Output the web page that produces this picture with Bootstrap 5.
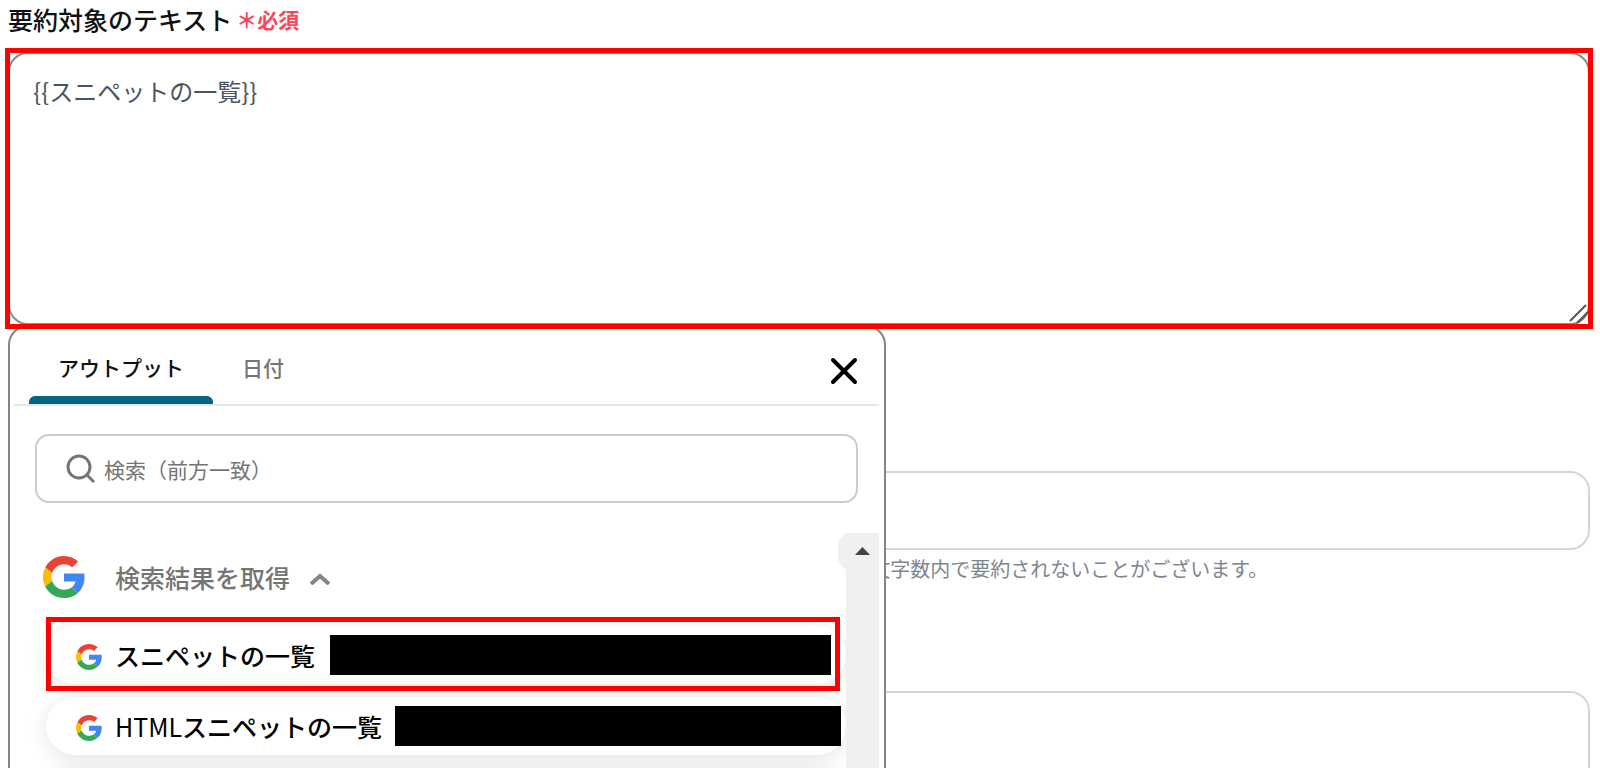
<!DOCTYPE html>
<html lang="ja">
<head>
<meta charset="utf-8">
<meta name="viewport" content="width=device-width, initial-scale=1">
<title>要約対象のテキスト</title>
<link href="https://cdn.jsdelivr.net/npm/bootstrap@5.3.0/dist/css/bootstrap.min.css" rel="stylesheet">
<style>
body { font-family: "Noto Sans CJK JP", sans-serif; font-size: 25px; line-height: 32px; color: #111; background: #fff; }
.form-page { padding: 3px 10px 0 8px; }
.field-label { height: 49px; gap: 4px; font-weight: 500; }
.required-mark { font-size: 21px; font-weight: 700; color: #ff4458; }
.field-box { border: 2px solid #d2d7de; border-radius: 20px; }
.field-box, .field-box:focus { box-shadow: none; }
.source-text { height: 273px; padding: 21px 23px; border-color: #8a8a8a; font-size: 24px; line-height: 32px; color: #4a545e; resize: none; }
.limit-input { height: 79px; margin-top: 146px; }
.limit-hint { margin: 3px 0 0 54.5%; font-size: 20px; color: #7d868f; white-space: nowrap; }
.extra-text { height: 180px; margin-top: 106px; resize: none; }
.marker { position: absolute; border: 5px solid #f00; pointer-events: none; }
.marker-field { inset: -4px -3px; z-index: 5; }
.marker-item { inset: -9px 6px -7px 0; z-index: 2; }
.grip { position: absolute; right: 0; bottom: 0; }
.picker { position: absolute; top: 100%; left: 0; width: 55.5%; height: 520px; padding: 0 5px 0 4px; border: 2px solid #858585; border-radius: 20px; background: #fff; z-index: 3; overflow: hidden; }
.picker-tabs { height: 79px; padding: 0 17px 0 15px; border-bottom: 2px solid #e6e6e6; font-size: 21px; }
.picker-tab { position: relative; border: 0; background: none; padding: 3px 29px 0; color: #757575; font-weight: 500; }
.picker-tab.active { color: #111; }
.picker-tab.active::after { content: ""; position: absolute; left: 0; right: 0; bottom: 0; height: 8px; border-radius: 6px 6px 0 0; background: #03657f; }
.close-x { border: 0; background: none; padding: 2px 0 0; }
.search-box { height: 69px; margin: 28px 21px 0 21px; padding: 0 28px; gap: 9px; border: 2px solid #ccc; border-radius: 14px; }
.search-box input { border: 0; outline: 0; padding: 0; background: none; font-size: 21px; }
.search-box input::placeholder { color: #757575; opacity: 1; }
.results { height: 300px; margin-top: 30px; }
.results-list { min-width: 0; padding: 23px 0 0 29px; overflow: hidden; }
.group-head { border: 0; background: none; height: 42px; padding: 0; gap: 30px; color: #757575; font-weight: 500; }
.group-title { gap: 20px; }
.snippets { margin: 28px 0 0 3px; gap: 13px; }
.snippet { height: 58px; padding: 0 15px 0 30px; gap: 13px; border: 0; border-radius: 29px; background: #fff; box-shadow: 0 4px 20px rgba(0,0,0,.11); font-weight: 500; color: #000; text-align: left; white-space: nowrap; }
.snippet svg { margin-top: 4px; }
.redacted { height: 40px; margin-left: 2px; background: #000; }
.snippet.wide { padding-right: 5px; }
.snippet.wide .redacted { margin-left: 0; }
.scroll-rail { width: 33px; background: #f0f0f0; position: relative; }
.scroll-rail::before { content: ""; position: absolute; left: -8px; top: 0; width: 8px; height: 37px; background: #f0f0f0; clip-path: polygon(100% 0, 0 8px, 0 29px, 100% 100%); }
.scroll-rail svg { margin: 14px 0 0 9px; }
</style>
<script src="https://cdn.jsdelivr.net/npm/bootstrap@5.3.0/dist/js/bootstrap.bundle.min.js"></script>
</head>
<body>
<svg class="d-none" aria-hidden="true">
  <symbol id="google-g" viewBox="0 0 48 48">
    <path fill="#ea4335" d="M24 9.500c3.500 0 6.700 1.200 9.200 3.600l6.900-6.900C35.900 2.400 30.500 0 24 0 14.600 0 6.500 5.400 2.600 13.200l8 6.200C12.400 13.700 17.700 9.500 24 9.500z"/>
    <path fill="#4285f4" d="M47.500 24.500c0-1.600-.2-3.100-.4-4.500H24v9h13.200c-.6 3-2.500 5.500-5 7.200l7.700 6C44.400 38 47.500 31.800 47.500 24.500z"/>
    <path fill="#fbbc05" d="M10.500 28.600c-.5-1.500-.8-3-.8-4.600s.3-3.100.8-4.600l-8-6.200C.9 16.500 0 20.100 0 24s.9 7.500 2.600 10.800z"/>
    <path fill="#34a853" d="M24 48c6.500 0 11.900-2.100 15.900-5.800l-7.700-6c-2.100 1.400-4.900 2.300-8.200 2.300-6.300 0-11.600-4.200-13.500-9.900l-8 6.200C6.500 42.600 14.600 48 24 48z"/>
  </symbol>
</svg>
<div class="vh-100 overflow-hidden">
<main class="form-page">
  <label class="field-label d-flex" for="source">要約対象のテキスト<span class="required-mark">＊必須</span></label>
  <div class="position-relative">
    <textarea id="source" class="form-control field-box source-text">{{スニペットの一覧}}</textarea>
    <svg class="grip" width="24" height="24" viewBox="0 0 24 24" fill="none" stroke="#555" stroke-width="2"><path d="M4 20 20 4M11 22 22 11"/></svg>
    <div class="marker marker-field"></div>
    <section class="picker" aria-label="アウトプットの選択">
      <div class="picker-tabs d-flex align-items-stretch">
        <button class="picker-tab active" type="button">アウトプット</button>
        <button class="picker-tab" type="button">日付</button>
        <button class="close-x ms-auto" type="button" aria-label="閉じる"><svg class="d-block mt-2" width="36" height="36" viewBox="0 0 36 36" stroke="#000" stroke-width="4" stroke-linecap="round"><path d="M7 7 29 29M29 7 7 29"/></svg></button>
      </div>
      <div class="search-box d-flex align-items-center">
        <svg class="flex-shrink-0" width="30" height="30" viewBox="0 0 30 30" fill="none" stroke="#757575" stroke-width="3"><circle cx="14" cy="13" r="11"/><path d="m22 21 7 7"/></svg>
        <input class="flex-grow-1" type="text" placeholder="検索（前方一致）" aria-label="検索">
      </div>
      <div class="results d-flex">
        <div class="results-list flex-grow-1">
          <button class="group-head d-flex align-items-center" type="button">
            <svg width="42" height="42"><use href="#google-g"/></svg>
            <span class="group-title d-flex align-items-center">検索結果を取得<svg class="mt-1" width="20" height="12" viewBox="0 0 20 12" fill="none" stroke="#858585" stroke-width="4"><path d="m1 11 9-8 9 8"/></svg></span>
          </button>
          <div class="snippets d-flex flex-column">
            <div class="position-relative d-grid">
              <button class="snippet d-flex align-items-center" type="button"><svg width="26" height="26"><use href="#google-g"/></svg><span>スニペットの一覧</span><span class="redacted flex-grow-1"></span></button>
              <div class="marker marker-item"></div>
            </div>
            <button class="snippet wide d-flex align-items-center" type="button"><svg width="26" height="26"><use href="#google-g"/></svg><span><span class="fw-normal">HTML</span>スニペットの一覧</span><span class="redacted flex-grow-1"></span></button>
            <button class="snippet" type="button" aria-label="次の項目"></button>
          </div>
        </div>
        <div class="scroll-rail flex-shrink-0"><svg class="d-block" width="15" height="8" viewBox="0 0 15 8"><path fill="#444" d="M7.500 0 15 8H0z"/></svg></div>
      </div>
    </section>
  </div>
  <input class="form-control field-box limit-input" type="text" aria-label="文字数">
  <p class="limit-hint">文字数内で要約されないことがございます。</p>
  <textarea class="form-control field-box extra-text" aria-label="要約の条件"></textarea>
</main>
</div>
</body>
</html>
